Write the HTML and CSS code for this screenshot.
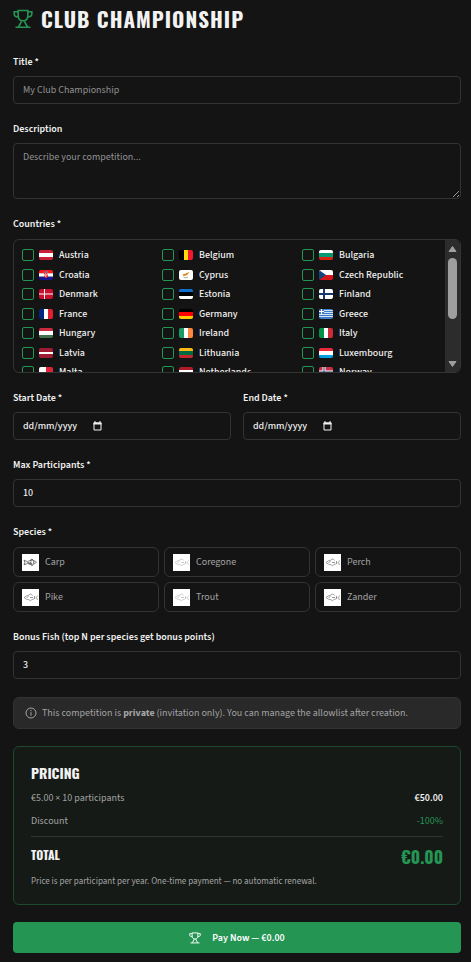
FILE: index.html
```html
<!DOCTYPE html>
<html lang="en">
<head>
<meta charset="utf-8">
<meta name="viewport" content="width=device-width, initial-scale=1">
<title>Club Championship</title>
<link rel="stylesheet" href="styles.css">
</head>
<body>
<svg class="defs" aria-hidden="true">
  <symbol id="trophy" viewBox="0 0 20 20">
    <path d="M5.200 1.500h9.600v5.200c0 3-2 5-4.800 5s-4.800-2-4.800-5zM5.200 2.700H1.200v2.200c0 1.700 1.300 2.900 4 3M14.800 2.700h4v2.200c0 1.700-1.300 2.900-4 3M9 11.700L5.500 18M11 11.700l3.500 6.300M2.500 18.200h15" fill="none" stroke="currentColor" stroke-width="1.600"/>
  </symbol>
  <symbol id="calendar" viewBox="0 0 9 10">
    <path d="M1 2h7v7H1z" fill="none" stroke="currentColor"/><path d="M.5 1.500h8v2h-8zM1.500 0h1v2h-1zM6.500 0h1v2h-1z" fill="currentColor"/>
  </symbol>
  <symbol id="fish" viewBox="0 0 17 17">
    <path d="M2 8.500q2-2 5-2.500l2-1.200 1.500 1.700M2 8.500q2 2.200 5 2.200l1.500 1.200 1-1.200q2.500-.5 4-2M15.500 6.500l-1 2 1 2.500" fill="none" stroke="currentColor" stroke-width=".8"/>
    <path d="M4.500 8.500h1M8 8.500h3M12.500 7v3M6 7v1" fill="none" stroke="currentColor" stroke-width=".9"/>
  </symbol>
  <symbol id="fish-left" viewBox="0 0 17 17">
    <path d="M14.500 8.300c-2-2.300-6-2.600-9-.6L2 6.200l.9 2.300L2 10.800l3.500-1.300c3 1.500 7 1 9-1.200z" fill="none" stroke="currentColor" stroke-width=".8"/>
    <path d="M5.500 8.500l2 .3 2-1M8 6.500l2-1.500 1.500 1.500M7 9.800l3-.5M9 10.500l1 1.300 1-1M12 7l-.5 2.500" fill="none" stroke="currentColor" stroke-width=".9"/>
  </symbol>
</svg>

<main class="page">
  <h1 class="title"><svg class="title-icon" aria-hidden="true"><use href="#trophy"/></svg>CLUB CHAMPIONSHIP</h1>

  <form class="form">
    <div class="field">
      <label for="title">Title *</label>
      <input class="control" id="title" type="text" placeholder="My Club Championship">
    </div>
    <div class="field">
      <label for="description">Description</label>
      <textarea class="control area" id="description" placeholder="Describe your competition..."></textarea>
    </div>

    <fieldset class="field">
      <legend>Countries *</legend>
      <div class="countries">
        <div class="country-list">
          <label class="country"><input type="checkbox"><span class="flag at"></span>Austria</label>
          <label class="country"><input type="checkbox"><span class="flag be"></span>Belgium</label>
          <label class="country"><input type="checkbox"><span class="flag bg"></span>Bulgaria</label>
          <label class="country"><input type="checkbox"><svg class="flag" viewBox="0 0 14 10"><path fill="#ff1a1a" d="M0 0h14v3.300H0z"/><path fill="#fff" d="M0 3.300h14v3.400H0z"/><path fill="#171796" d="M0 6.700h14V10H0z"/><path fill="#e33" d="M5 2.500h4v3.200c0 1.500-1 2-2 2.300-1-.3-2-.8-2-2.300z"/><path fill="#fff" d="M6 3.500h1v1H6zM8 3.500h1v1H8zM5 4.500h1v1H5zM7 4.500h1v1H7zM6 5.500h1v1H6z"/><path fill="#5b8fd0" d="M5 1.500h4v1H5z"/></svg>Croatia</label>
          <label class="country"><input type="checkbox"><svg class="flag" viewBox="0 0 14 10"><path fill="#fff" d="M0 0h14v10H0z"/><path fill="#d98d2b" d="M3.500 4.500l3-1 4-1.800-1.500 2.300-1.500 1.500-3 .5z"/><path d="M4.500 7.200q2 1.400 4.500 0" fill="none" stroke="#8d9a72" stroke-width=".8"/></svg>Cyprus</label>
          <label class="country"><input type="checkbox"><svg class="flag" viewBox="0 0 14 10"><path fill="#fff" d="M0 0h14v5H0z"/><path fill="#d7141a" d="M0 5h14v5H0z"/><path fill="#11457e" d="M0 0l7 5-7 5z"/></svg>Czech Republic</label>
          <label class="country"><input type="checkbox"><svg class="flag" viewBox="0 0 14 10"><path fill="#c8102e" d="M0 0h14v10H0z"/><path fill="#fff" d="M5 0h1v10H5zM0 4.500h14v1H0z"/></svg>Denmark</label>
          <label class="country"><input type="checkbox"><span class="flag ee"></span>Estonia</label>
          <label class="country"><input type="checkbox"><svg class="flag" viewBox="0 0 14 10"><path fill="#fff" d="M0 0h14v10H0z"/><path fill="#183872" d="M4 0h2v10H4zM0 4h14v2H0z"/></svg>Finland</label>
          <label class="country"><input type="checkbox"><span class="flag fr"></span>France</label>
          <label class="country"><input type="checkbox"><span class="flag de"></span>Germany</label>
          <label class="country"><input type="checkbox"><svg class="flag" viewBox="0 0 14 10"><path fill="#3f7cc8" d="M0 0h14v10H0z"/><path fill="#d5e4f5" d="M0 1h14v1H0zM0 3h14v1H0zM0 5h14v1H0zM0 7h14v1H0z"/><path fill="#3f7cc8" d="M0 0h5v5H0z"/><path fill="#fff" d="M2 0h1v5H2zM0 2h5v1H0z"/></svg>Greece</label>
          <label class="country"><input type="checkbox"><span class="flag hu"></span>Hungary</label>
          <label class="country"><input type="checkbox"><span class="flag ie"></span>Ireland</label>
          <label class="country"><input type="checkbox"><span class="flag it"></span>Italy</label>
          <label class="country"><input type="checkbox"><span class="flag lv"></span>Latvia</label>
          <label class="country"><input type="checkbox"><span class="flag lt"></span>Lithuania</label>
          <label class="country"><input type="checkbox"><span class="flag lu"></span>Luxembourg</label>
          <label class="country"><input type="checkbox"><span class="flag mt"></span>Malta</label>
          <label class="country"><input type="checkbox"><span class="flag nl"></span>Netherlands</label>
          <label class="country"><input type="checkbox"><svg class="flag" viewBox="0 0 14 10"><path fill="#c8304a" d="M0 0h14v10H0z"/><path fill="#fff" d="M3.500 0h3v10h-3zM0 3.500h14v3H0z"/><path fill="#183872" d="M4.500 0h1v10h-1zM0 4.500h14v1H0z"/></svg>Norway</label>
        </div>
        <div class="scrollbar" aria-hidden="true">
          <svg class="arrow" viewBox="0 0 9 7"><path d="M4.500 1L8 6H1z"/></svg>
          <div class="track"><div class="thumb"></div></div>
          <svg class="arrow" viewBox="0 0 9 7"><path d="M4.500 6L8 1H1z"/></svg>
        </div>
      </div>
    </fieldset>

    <div class="dates">
      <div class="field">
        <label for="start">Start Date *</label>
        <div class="control date"><input id="start" type="text" value="dd/mm/yyyy"><button type="button" aria-label="Pick start date"><svg aria-hidden="true"><use href="#calendar"/></svg></button></div>
      </div>
      <div class="field">
        <label for="end">End Date *</label>
        <div class="control date"><input id="end" type="text" value="dd/mm/yyyy"><button type="button" aria-label="Pick end date"><svg aria-hidden="true"><use href="#calendar"/></svg></button></div>
      </div>
    </div>

    <div class="field">
      <label for="max">Max Participants *</label>
      <input class="control" id="max" type="text" inputmode="numeric" value="10">
    </div>

    <fieldset class="field">
      <legend>Species *</legend>
      <div class="species">
        <button type="button"><svg class="dark" aria-hidden="true"><use href="#fish-left"/></svg>Carp</button>
        <button type="button"><svg class="pale" aria-hidden="true"><use href="#fish"/></svg>Coregone</button>
        <button type="button"><svg aria-hidden="true"><use href="#fish"/></svg>Perch</button>
        <button type="button"><svg aria-hidden="true"><use href="#fish"/></svg>Pike</button>
        <button type="button"><svg class="pale" aria-hidden="true"><use href="#fish"/></svg>Trout</button>
        <button type="button"><svg aria-hidden="true"><use href="#fish"/></svg>Zander</button>
      </div>
    </fieldset>

    <div class="field">
      <label for="bonus">Bonus Fish (top N per species get bonus points)</label>
      <input class="control" id="bonus" type="text" inputmode="numeric" value="3">
    </div>

    <div class="checkout">
      <div class="notice">
        <svg viewBox="0 0 12 12" aria-hidden="true"><circle cx="6" cy="6" r="5" fill="none" stroke="currentColor"/><path d="M6 5.200v3.500M6 3v1.200" stroke="currentColor"/></svg>
        <p>This competition is <strong>private</strong> (invitation only). You can manage the allowlist after creation.</p>
      </div>

      <section class="pricing">
        <h2>PRICING</h2>
        <div class="row"><span>€5.00 × 10 participants</span><strong>€50.00</strong></div>
        <div class="row"><span>Discount</span><span class="green">-100%</span></div>
        <div class="total"><h3>TOTAL</h3><span class="amount">€0.00</span></div>
        <p class="note">Price is per participant per year. One-time payment — no automatic renewal.</p>
      </section>

      <button class="pay" type="submit"><svg aria-hidden="true"><use href="#trophy"/></svg>Pay Now — €0.00</button>
    </div>
  </form>
</main>
</body>
</html>
```
FILE: styles.css
```css
:root {
  --bg: #141414;
  --line: #333333;
  --text: #f2f2f2;
  --muted: #a3a3a3;
  --green: #259554;
  --display: "Oswald", "Liberation Sans Narrow", "Liberation Sans", sans-serif;
}

* { box-sizing: border-box; }

body {
  margin: 0;
  background: var(--bg);
  color: var(--text);
  font: 400 10px/14px "Source Sans 3", "Source Sans Pro", "Noto Sans CJK SC", "Noto Sans", sans-serif;
}

h1, h2, h3, p { margin: 0; }
button, input, textarea { font: inherit; color: inherit; }
.defs { display: none; }

.page { padding: 6px 10px 9px 13px; }

.title {
  display: flex;
  align-items: center;
  gap: 8px;
  margin-bottom: 23px;
  font: 700 21px/26px var(--display);
  letter-spacing: 1px;
}
.title-icon { width: 20px; height: 20px; color: var(--green); }

.form { display: flex; flex-direction: column; gap: 18px; }

.field {
  display: flex;
  flex-direction: column;
  gap: 7px;
  min-width: 0;
  margin: 0;
  padding: 0;
  border: 0;
}
.field > label, legend { display: block; padding: 0; font-weight: 600; }
legend { margin-bottom: 8px; }

.control {
  width: 100%;
  height: 28px;
  padding: 0 9px;
  border: 1px solid var(--line);
  border-radius: 4px;
  background: transparent;
  outline: none;
}
.control, .date input { font-weight: 500; }
.control::placeholder { color: #929292; opacity: 1; font-weight: 400; }
.area { display: block; height: 56px; padding: 6px 9px; resize: vertical; color-scheme: dark; }

.countries {
  display: flex;
  height: 134px;
  border: 1px solid var(--line);
  border-radius: 6px;
  overflow: hidden;
}
.country-list {
  flex: 1;
  display: grid;
  grid-template-columns: repeat(3, 1fr);
  grid-auto-rows: 20px 19px;
  column-gap: 5px;
  padding: 5px 8px;
  overflow-y: auto;
  scrollbar-width: none;
}
.country { display: flex; align-items: center; white-space: nowrap; font-weight: 500; }
.country input {
  appearance: none;
  width: 12px;
  height: 12px;
  margin: 0 5px 0 0;
  border: 1px solid var(--green);
  border-radius: 2px;
}
.country input:checked { background: var(--green); }

.flag { width: 14px; height: 10px; margin-right: 6px; border-radius: 2px; overflow: hidden; }
.at { background: linear-gradient(#c8203a 33%, #fff 33% 67%, #c8203a 67%); }
.be { background: linear-gradient(90deg, #000 33%, #ffd90c 33% 67%, #f31830 67%); }
.bg { background: linear-gradient(#fff 33%, #009b74 33% 67%, #d62612 67%); }
.ee { background: linear-gradient(#0f6fd0 33%, #000 33% 67%, #fff 67%); }
.fr { background: linear-gradient(90deg, #00267f 33%, #fff 33% 67%, #e02030 67%); }
.de { background: linear-gradient(#000 33%, #f00 33% 67%, #fc0 67%); }
.hu { background: linear-gradient(#cd2a3e 33%, #fff 33% 67%, #436f4d 67%); }
.ie { background: linear-gradient(90deg, #169b62 33%, #fff 33% 67%, #ff883e 67%); }
.it { background: linear-gradient(90deg, #009246 33%, #fff 33% 67%, #ce2b37 67%); }
.lv { background: linear-gradient(#9e1b34 40%, #fff 40% 60%, #9e1b34 60%); }
.lt { background: linear-gradient(#fdb913 33%, #006a44 33% 67%, #c1272d 67%); }
.lu { background: linear-gradient(#ed2939 33%, #fff 33% 67%, #00a1de 67%); }
.mt { background: linear-gradient(90deg, #fff 50%, #e0223a 50%); }
.nl { background: linear-gradient(#ae1c28 33%, #fff 33% 67%, #21468b 67%); }

.scrollbar {
  flex: none;
  display: flex;
  flex-direction: column;
  align-items: center;
  gap: 5px;
  width: 15px;
  padding: 5px 0 4px;
  background: #2c2c2c;
}
.arrow { width: 9px; height: 8px; fill: #9f9f9f; stroke: #9f9f9f; stroke-linejoin: round; }
.track { flex: 1; }
.thumb { width: 9px; height: 61px; border-radius: 5px; background: #9f9f9f; }

.dates { display: grid; grid-template-columns: 1fr 1fr; gap: 12px; }
.date { display: flex; align-items: center; gap: 10px; }
.date input { width: 60px; padding: 0; border: 0; background: none; outline: none; }
.date button { display: flex; padding: 0; border: 0; background: none; }
.date svg { width: 9px; height: 10px; }

.species { display: grid; grid-template-columns: repeat(3, 1fr); gap: 5px; }
.species button {
  display: flex;
  align-items: center;
  gap: 6px;
  height: 30px;
  padding: 0 8px;
  border: 1px solid var(--line);
  border-radius: 6px;
  background: none;
  color: var(--muted);
}
.species svg { width: 17px; height: 17px; background: #fff; color: #8c8c8c; }
.species .dark { color: #555555; }
.species .pale { color: #c4c4c4; }

.checkout { display: flex; flex-direction: column; gap: 17px; }

.notice {
  display: flex;
  align-items: center;
  gap: 5px;
  padding: 8px 11px;
  border: 1px solid var(--line);
  border-radius: 6px;
  background: #292929;
  color: var(--muted);
}
.notice svg { flex: none; width: 12px; height: 12px; }

.pricing {
  padding: 17px 17px 15px;
  border: 1px solid #1b4a2e;
  border-radius: 6px;
  background: #161a17;
  color: var(--muted);
}
.pricing h2 { margin-bottom: 10px; color: var(--text); font: 700 14px/17px var(--display); }
.row { display: flex; justify-content: space-between; }
.row + .row { margin-top: 9px; }
.row strong { color: var(--text); font-weight: 600; }
.row .green { color: var(--green); }
.total {
  display: flex;
  justify-content: space-between;
  margin-top: 8px;
  padding-top: 8px;
  border-top: 1px solid var(--line);
  font-family: var(--display);
}
.total h3 { color: var(--text); font: 700 12px/20px var(--display); }
.amount { color: var(--green); font-weight: 700; font-size: 17px; line-height: 24px; }
.note { margin-top: 6px; font-size: 9px; }

.pay {
  display: flex;
  align-items: center;
  justify-content: center;
  gap: 11px;
  height: 31px;
  border: 0;
  border-radius: 4px;
  background: var(--green);
  color: #fff;
  font-weight: 600;
}
.pay svg { width: 12px; height: 12px; }
```
